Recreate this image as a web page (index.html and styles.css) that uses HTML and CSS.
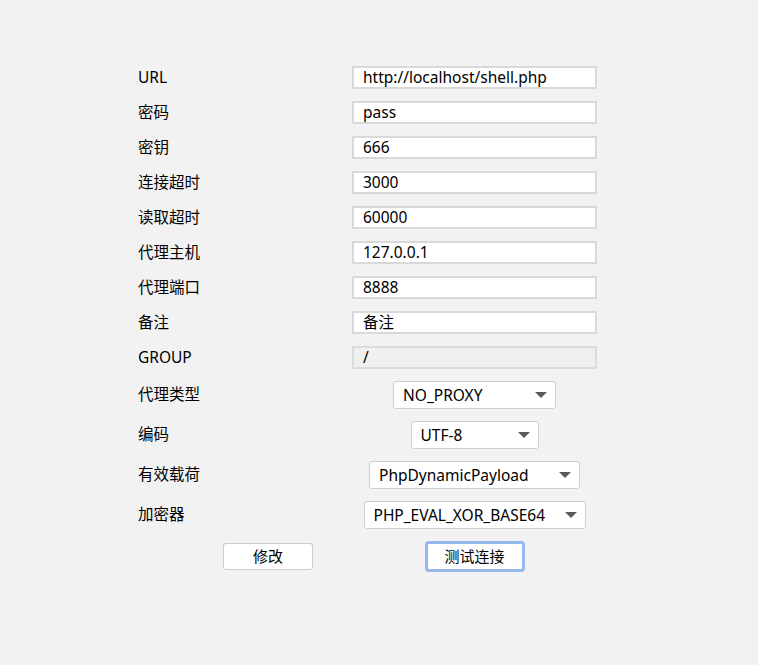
FILE: index.html
```html
<!DOCTYPE html>
<html lang="zh">
<head>
<meta charset="utf-8">
<title>Shell Setting</title>
<link rel="stylesheet" href="styles.css">
</head>
<body>
<div class="form">
  <div class="grid">
    <div class="label">URL</div><div class="field">http://localhost/shell.php</div>
    <div class="label">密码</div><div class="field">pass</div>
    <div class="label">密钥</div><div class="field">666</div>
    <div class="label">连接超时</div><div class="field">3000</div>
    <div class="label">读取超时</div><div class="field">60000</div>
    <div class="label">代理主机</div><div class="field">127.0.0.1</div>
    <div class="label">代理端口</div><div class="field">8888</div>
    <div class="label">备注</div><div class="field">备注</div>
    <div class="label">GROUP</div><div class="field disabled">/</div>
    <div class="label">代理类型</div><div class="combo w-proxy"><span>NO_PROXY</span><i class="arrow"></i></div>
    <div class="label">编码</div><div class="combo w-enc"><span>UTF-8</span><i class="arrow"></i></div>
    <div class="label">有效载荷</div><div class="combo w-payload"><span>PhpDynamicPayload</span><i class="arrow"></i></div>
    <div class="label">加密器</div><div class="combo w-crypt"><span>PHP_EVAL_XOR_BASE64</span><i class="arrow"></i></div>
  </div>
  <div class="buttons">
    <button class="btn w-edit">修改</button>
    <button class="btn focused w-test">测试连接</button>
  </div>
</div>
</body>
</html>
```

FILE: styles.css
```css
html, body {
  margin: 0;
  padding: 0;
  background: #f2f2f2;
}
body {
  width: 758px;
  height: 665px;
  font-family: "Noto Sans", "Noto Sans CJK SC", sans-serif;
  font-size: 15.5px;
  color: #000;
}
.form {
  padding: 66px 0 0 138px;
}
.grid {
  display: grid;
  grid-template-columns: 214px 245px;
  row-gap: 12px;
  align-items: center;
}
.label {
  line-height: 20px;
  padding-bottom: 2px;
  white-space: nowrap;
}
.field {
  box-sizing: border-box;
  height: 23px;
  background: #fff;
  border: 2px solid #d9d9d9;
  padding: 0 0 1px 9px;
  line-height: 18px;
  white-space: nowrap;
  overflow: hidden;
}
.field.disabled {
  background: #f0f0f0;
  border-color: #dcdcdc;
}
.combo {
  box-sizing: border-box;
  height: 28px;
  justify-self: center;
  background: #fff;
  border: 1px solid #cfcfcf;
  border-radius: 3px;
  padding: 0 8px 1px 9px;
  display: flex;
  align-items: center;
  justify-content: space-between;
  white-space: nowrap;
}
.combo span {
  line-height: 20px;
}
.arrow {
  width: 0;
  height: 0;
  margin-top: 1px;
  border-left: 6px solid transparent;
  border-right: 6px solid transparent;
  border-top: 6px solid #5a5a5a;
}
.w-proxy { width: 163px; }
.w-enc { width: 128px; }
.w-payload { width: 211px; }
.w-crypt { width: 222px; }
.buttons {
  display: grid;
  grid-template-columns: 260px 153px;
  justify-items: center;
  align-items: center;
  margin-top: 12px;
}
.btn {
  box-sizing: border-box;
  height: 27px;
  background: #fff;
  border: 1px solid #cccccc;
  border-radius: 3px;
  font-family: "Noto Sans CJK SC", sans-serif;
  font-size: 15px;
  color: #000;
  padding: 0 0 2px;
  line-height: 20px;
}
.w-edit { width: 90px; }
.w-test { width: 100px; }
.btn.focused {
  height: 31px;
  border: 3px solid #93baea;
  border-radius: 4px;
}
```
